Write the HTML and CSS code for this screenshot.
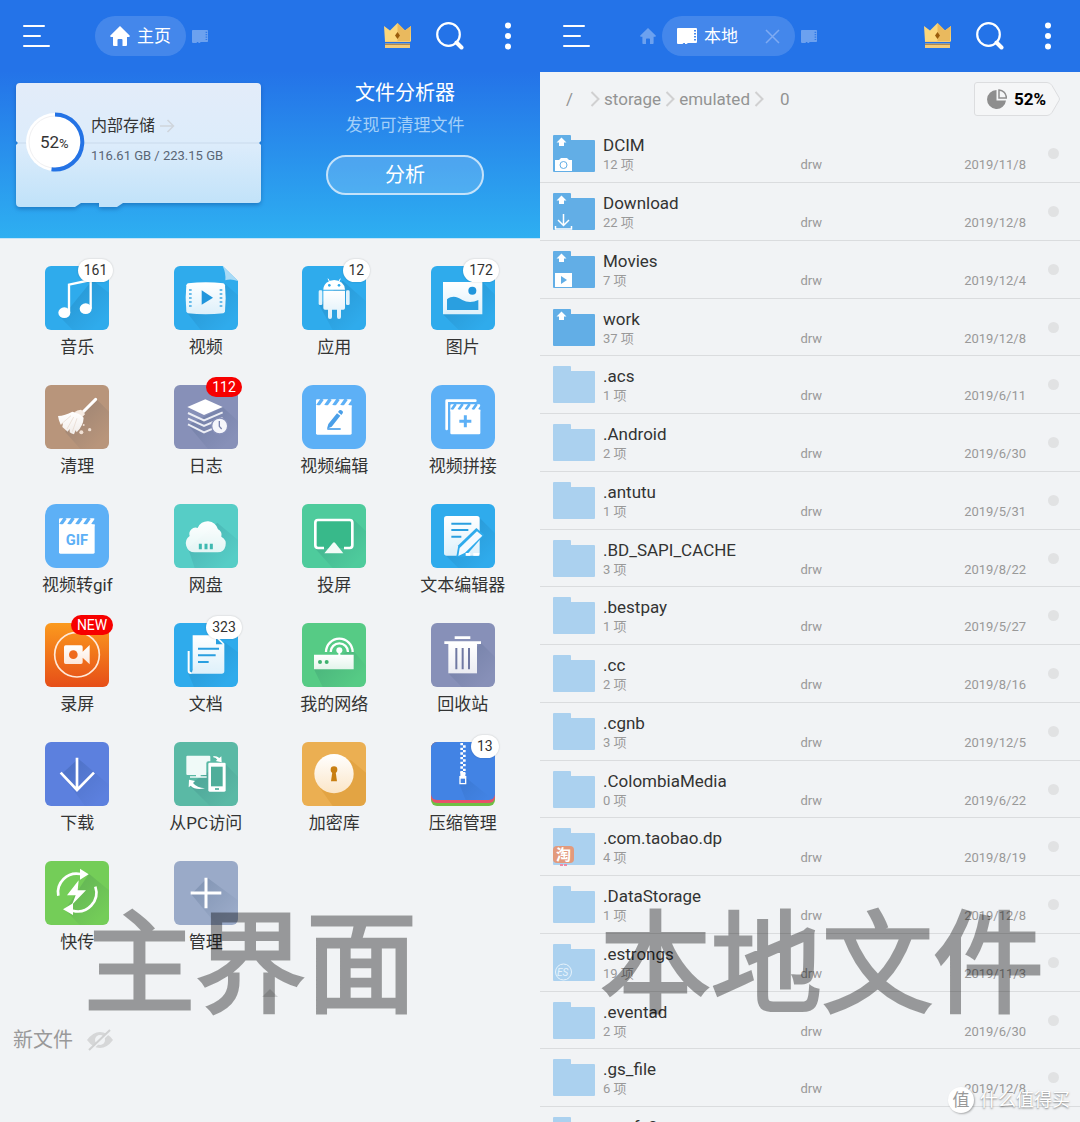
FILE: index.html
```html
<!DOCTYPE html>
<html lang="zh-CN">
<head>
    <meta charset="UTF-8">
    <meta name="viewport" content="width=device-width, initial-scale=1.0">
    <title>文件管理器</title>
    <link rel="stylesheet" href="styles.css">
</head>
<body>

    <!-- shared icons -->
    <svg class="defs" width="0" height="0" aria-hidden="true">
        <defs>
            <linearGradient id="fade" x1="0" y1="0" x2="0" y2="1">
                <stop offset="0" stop-color="#fff"/>
                <stop offset="1" stop-color="#fff" stop-opacity=".84"/>
            </linearGradient>
            <linearGradient id="orange" x1="0" y1="0" x2="0" y2="1">
                <stop offset="0" stop-color="#fb9a1e"/>
                <stop offset="1" stop-color="#e64e18"/>
            </linearGradient>
            <linearGradient id="cream" x1="0" y1="0" x2="0" y2="1">
                <stop offset="0" stop-color="#fff"/>
                <stop offset="1" stop-color="#fbe6c8"/>
            </linearGradient>
            <linearGradient id="shade" gradientUnits="userSpaceOnUse" x1="60" y1="60" x2="170" y2="170">
                <stop offset="0" stop-color="#024" stop-opacity=".16"/>
                <stop offset="1" stop-color="#024" stop-opacity="0"/>
            </linearGradient>
            <linearGradient id="sd" x1="0" y1="0" x2="0" y2="1">
                <stop offset="0" stop-color="#e3ecf9"/>
                <stop offset=".5" stop-color="#dcecfb"/>
                <stop offset="1" stop-color="#c0e2f9"/>
            </linearGradient>
        </defs>
        <symbol id="menu" viewBox="0 0 28 24">
            <path d="M2 2h20M2 12h16M2 22h25" stroke="#fff" stroke-width="2" fill="none" stroke-linecap="round"/>
        </symbol>
        <symbol id="home" viewBox="0 0 20 20">
            <path d="M10 0L19.6 9.4a.9.9 0 0 1-.6 1.5H17V19a1 1 0 0 1-1 1h-3.5v-6a1 1 0 0 0-1-1h-3a1 1 0 0 0-1 1v6H4a1 1 0 0 1-1-1v-8.1H1a.9.9 0 0 1-.6-1.5z" fill="#fff"/>
        </symbol>
        <symbol id="card" viewBox="0 0 20 16">
            <path d="M1 0h18a1 1 0 0 1 1 1v13a1 1 0 0 1-1 1h-8l-1.5 1H8v-1H6.5L5.5 16H1a1 1 0 0 1-1-1V1a1 1 0 0 1 1-1z" fill="#fff"/>
            <path d="M18 2v1.500m0 1.500v1.500m0 1.500v1.500m0 1.500v1.500" stroke="#4a8aec" stroke-width="2"/>
        </symbol>
        <symbol id="crown" viewBox="0 0 27 26">
            <path d="M0 3l6 4.500L13.500 0 21 7.500 27 3v15.500H1z" fill="#fbd77c"/>
            <path d="M13.500 0L21 7.500 27 3l-1 15.500H13.500z" fill="#e9b95e"/>
            <path d="M13.500 9l2.500 3.500-2.500 3.500-2.500-3.500z" fill="#9a5d0c"/>
            <path d="M1 18h25v1H1zM1 20.500h25v4.500H1z" fill="#f3cb78"/>
            <path d="M1 21.500h25" stroke="#b5894a"/>
        </symbol>
        <symbol id="search" viewBox="0 0 28 28">
            <circle cx="12.500" cy="12.500" r="11.300" fill="none" stroke="#fff" stroke-width="2.200"/>
            <path d="M20.500 20.500l5 5" stroke="#fff" stroke-width="4" stroke-linecap="round"/>
        </symbol>
        <symbol id="more" viewBox="0 0 8 28">
            <circle cx="4" cy="3.500" r="3" fill="#fff"/><circle cx="4" cy="14" r="3" fill="#fff"/><circle cx="4" cy="24.500" r="3" fill="#fff"/>
        </symbol>
        <symbol id="chevron" viewBox="0 0 10 16">
            <path d="M1.500 1l7 7-7 7" fill="none" stroke="#d0d0d1" stroke-width="2"/>
        </symbol>
        <symbol id="folder" viewBox="0 0 42 37">
            <path d="M1 0h16a1 1 0 0 1 1 1v4h23a1 1 0 0 1 1 1v30a1 1 0 0 1-1 1H1a1 1 0 0 1-1-1V1a1 1 0 0 1 1-1z" fill="currentColor"/>
        </symbol>
        <symbol id="up" viewBox="0 0 42 37">
            <path d="M8.500 2.500l5 5H11V11H6V7.500H3.500z" fill="#fff"/>
        </symbol>
    </svg>

    <div class="app">

        <section class="pane">
            <div class="hero">
                <div class="topbar">
                    <button class="icon-btn menu-btn" aria-label="菜单"><svg width="28" height="24"><use href="#menu"/></svg></button>
                    <nav class="tabs home-tabs">
                        <a href="#home" class="tab active"><svg width="20" height="20"><use href="#home"/></svg><span>主页</span></a>
                        <a href="#local" class="mini-tab" aria-label="本地"><svg width="16" height="13"><use href="#card"/></svg></a>
                    </nav>
                    <div class="actions">
                        <button class="icon-btn" aria-label="会员"><svg width="27" height="26"><use href="#crown"/></svg></button>
                        <button class="icon-btn" aria-label="搜索"><svg width="28" height="28"><use href="#search"/></svg></button>
                        <button class="icon-btn more-btn" aria-label="更多"><svg width="8" height="28"><use href="#more"/></svg></button>
                    </div>
                </div>
                <div class="summary">
                    <a href="#storage" class="storage">
                        <svg class="storage-bg" viewBox="0 0 245 124" preserveAspectRatio="none">
                            <path d="M4 0h237a4 4 0 0 1 4 4v54l-2 2 2 2v54a4 4 0 0 1-4 4H107l-6 4H83v-4H65l-6 4H4a4 4 0 0 1-4-4V62l2-2-2-2V4a4 4 0 0 1 4-4z" fill="url(#sd)"/>
                            <path d="M2 60h241" stroke="#c9daec"/>
                        </svg>
                        <svg class="ring" viewBox="0 0 60 60">
                            <circle cx="30" cy="30" r="29" fill="#fff"/>
                            <circle cx="30" cy="30" r="26" fill="none" stroke="#f0f0f2"/>
                            <path d="M30 2.500a27.500 27.500 0 1 1-3.500 54.800" fill="none" stroke="#2473e5" stroke-width="4"/>
                            <text x="15" y="36" class="ring-num">52<tspan class="ring-pct">%</tspan></text>
                        </svg>
                        <span class="storage-text">
                            <span class="storage-name">内部存储 <svg width="15" height="14" viewBox="0 0 15 14"><path d="M0 7h14M7.500 1l6 6-6 6" fill="none" stroke="#cfd5dc" stroke-width="1.500"/></svg></span>
                            <span class="storage-size">116.61 GB / 223.15 GB</span>
                        </span>
                    </a>
                    <div class="analyzer">
                        <h2>文件分析器</h2>
                        <p>发现可清理文件</p>
                        <button class="analyze-btn">分析</button>
                    </div>
                </div>
            </div>

            <div class="grid">
                <a href="#music" class="item">
                    <span class="icon"><svg viewBox="0 0 192 192">
                        <rect width="192" height="192" rx="18" fill="#2fabec"/>
                        <path d="M45 153l38 39h91a18 18 0 0 0 18-18V80l-50-38-65 80z" fill="url(#shade)"/>
                        <path d="M72 140V56l65-14v86" fill="none" stroke="#fff" stroke-width="7"/>
                        <ellipse cx="58" cy="140" rx="18" ry="16" fill="#fff"/><ellipse cx="122" cy="128" rx="18" ry="16" fill="#fff"/>
                    </svg><span class="badge">161</span></span>
                    <span class="label">音乐</span>
                </a>
                <a href="#video" class="item">
                    <span class="icon"><svg viewBox="0 0 192 192">
                        <path d="M18 0h128l46 45v129a18 18 0 0 1-18 18H18a18 18 0 0 1-18-18V18A18 18 0 0 1 18 0z" fill="#2fabec"/>
                        <path d="M40 141l40 51h94a18 18 0 0 0 18-18v-86l-38-34z" fill="url(#shade)"/>
                        <path d="M146 0l46 45q-22-8-38-2 2-22-8-43z" fill="#a8daf6"/>
                        <path d="M42 52q54-6 106 0 4 1 5 6 4 38 0 78-1 5-5 6-54 6-106 0-4-1-5-6-4-40 0-78 1-5 5-6z" fill="url(#fade)"/>
                        <path d="M83 73l34 22-34 21z" fill="#2196dc"/>
                        <path d="M49 70v56M141 70v56" stroke="#3fa9e4" stroke-width="8" stroke-dasharray="4 8"/>
                    </svg></span>
                    <span class="label">视频</span>
                </a>
                <a href="#apps" class="item">
                    <span class="icon"><svg viewBox="0 0 192 192">
                        <rect width="192" height="192" rx="18" fill="#2fabec"/>
                        <path d="M52 118l40 74h82a18 18 0 0 0 18-18v-68l-70-62z" fill="url(#shade)"/>
                        <path d="M64 71a32.500 29 0 0 1 65 0z" fill="#fff"/>
                        <path d="M78 38l6 12M115 38l-6 12" stroke="#fff" stroke-width="3"/>
                        <circle cx="82" cy="58" r="4" fill="#2fabec"/><circle cx="111" cy="58" r="4" fill="#2fabec"/>
                        <path d="M64 74h65v52a5 5 0 0 1-5 5h-7v22a5 5 0 0 1-12 0v-22H90v22a5 5 0 0 1-12 0v-22h-9a5 5 0 0 1-5-5z" fill="url(#fade)"/>
                        <rect x="50" y="73" width="11" height="44" rx="4" fill="#dff2fc"/><rect x="132" y="73" width="11" height="44" rx="4" fill="#dff2fc"/>
                    </svg><span class="badge">12</span></span>
                    <span class="label">应用</span>
                </a>
                <a href="#pictures" class="item">
                    <span class="icon"><svg viewBox="0 0 192 192">
                        <rect width="192" height="192" rx="18" fill="#2fabec"/>
                        <path d="M36 145l47 47h91a18 18 0 0 0 18-18V86l-38-38z" fill="url(#shade)"/>
                        <path d="M36 48h118v97H36z" fill="url(#fade)"/>
                        <circle cx="124" cy="74" r="12" fill="#2196dc"/>
                        <path d="M48 100c18-14 32-6 46 2s32 8 48 0v30H48z" fill="#2a9fe0"/>
                    </svg><span class="badge">172</span></span>
                    <span class="label">图片</span>
                </a>

                <a href="#clean" class="item">
                    <span class="icon"><svg viewBox="0 0 192 192">
                        <rect width="192" height="192" rx="18" fill="#b8957b"/>
                        <path d="M60 140l46 52h68a18 18 0 0 0 18-18V80l-38-38z" fill="url(#shade)"/>
                        <path d="M152 43l-38 38" stroke="#fff" stroke-width="9" stroke-linecap="round"/>
                        <path d="M108 74q8 4 12 14l-8 8-24-14q8-8 20-8z" fill="#f6ece4"/>
                        <path d="M82 80q-22 12-43 13 2 14 8 26l7-5-2 12 16 14 6-8v10q6 5 13 6l5-12 3 6q20-20 21-44-12-14-34-18z" fill="url(#fade)"/>
                        <path d="M78 92l-30 26M86 96l-20 36M96 100l-14 40" stroke="#e6d6ca" stroke-width="2"/>
                        <circle cx="116" cy="120" r="3" fill="#f0e0d4"/><circle cx="134" cy="134" r="5" fill="#f0e0d4"/><circle cx="109" cy="142" r="6" fill="#f0e0d4"/>
                    </svg></span>
                    <span class="label">清理</span>
                </a>
                <a href="#log" class="item">
                    <span class="icon"><svg viewBox="0 0 192 192">
                        <rect width="192" height="192" rx="18" fill="#8790b8"/>
                        <path d="M42 120l60 72h72a18 18 0 0 0 18-18v-66l-46-42z" fill="url(#shade)"/>
                        <path d="M94 43l52 23-56 24-50-24z" fill="#fff"/>
                        <path d="M42 84l48 22 56-24M42 101l48 22 56-24M42 118l48 24 34-14" fill="none" stroke="#eceef5" stroke-width="6"/>
                        <circle cx="137" cy="123" r="24" fill="#f5f6fb" stroke="#8790b8" stroke-width="4"/>
                        <path d="M136 108v16l7 8" fill="none" stroke="#7a84ad" stroke-width="4"/>
                    </svg><span class="badge red">112</span></span>
                    <span class="label">日志</span>
                </a>
                <a href="#video-edit" class="item">
                    <span class="icon"><svg viewBox="0 0 192 192">
                        <rect width="192" height="192" rx="34" fill="#5db0f6"/>
                        <rect x="42" y="43" width="107" height="106" rx="4" fill="#fff"/>
                        <path d="M47 62l14-20M71 62l14-20M95 62l14-20M119 62l14-20M143 62l10-14" stroke="#5db0f6" stroke-width="10"/>
                        <path d="M42 61h107v6H42z" fill="#fff"/>
                        <path d="M105 85l10 7-26 33-14 6 4-14zM108 81l4-5q3-2 6 0l4 3q2 3 0 6l-4 5z" fill="#4a9fe8"/>
                        <path d="M76 132h40" stroke="#4a9fe8" stroke-width="5"/>
                    </svg></span>
                    <span class="label">视频编辑</span>
                </a>
                <a href="#video-join" class="item">
                    <span class="icon"><svg viewBox="0 0 192 192">
                        <rect width="192" height="192" rx="34" fill="#5db0f6"/>
                        <path d="M47 132V47h86" fill="none" stroke="#fff" stroke-width="8" stroke-linejoin="round" stroke-linecap="round"/>
                        <rect x="58" y="58" width="90" height="90" rx="4" fill="#fff"/>
                        <path d="M62 74l12-17M83 74l12-17M104 74l12-17M125 74l12-17M145 74l10-15" stroke="#5db0f6" stroke-width="8"/>
                        <path d="M58 74h90v5H58z" fill="#fff"/>
                        <path d="M103 91v36M85 109h36" stroke="#5db0f6" stroke-width="9"/>
                    </svg></span>
                    <span class="label">视频拼接</span>
                </a>

                <a href="#gif" class="item">
                    <span class="icon"><svg viewBox="0 0 192 192">
                        <rect width="192" height="192" rx="34" fill="#5db0f6"/>
                        <rect x="42" y="43" width="107" height="106" rx="4" fill="#fff"/>
                        <path d="M47 62l14-20M71 62l14-20M95 62l14-20M119 62l14-20M143 62l10-14" stroke="#5db0f6" stroke-width="10"/>
                        <path d="M42 61h107v6H42z" fill="#fff"/>
                        <text x="96" y="122" class="gif-text">GIF</text>
                    </svg></span>
                    <span class="label">视频转gif</span>
                </a>
                <a href="#cloud" class="item">
                    <span class="icon"><svg viewBox="0 0 192 192">
                        <rect width="192" height="192" rx="18" fill="#56cdc6"/>
                        <path d="M42 132l20 60h112a18 18 0 0 0 18-18v-66l-62-52z" fill="url(#shade)"/>
                        <path d="M62 145a27 27 0 0 1-15-49 19 19 0 0 1 24-24 32 32 0 0 1 61 4 18 18 0 0 1 10 22 25 25 0 0 1-11 47z" fill="url(#fade)"/>
                        <path d="M79 119v17M96 119v17M112 119v17" stroke="#3fb9b1" stroke-width="9"/>
                    </svg></span>
                    <span class="label">网盘</span>
                </a>
                <a href="#cast" class="item">
                    <span class="icon"><svg viewBox="0 0 192 192">
                        <rect width="192" height="192" rx="18" fill="#4ecb9c"/>
                        <path d="M38 132l54 60h82a18 18 0 0 0 18-18V82l-38-36z" fill="url(#shade)"/>
                        <rect x="40" y="48" width="111" height="84" rx="8" fill="#38b98a"/>
                        <path d="M66 132H48a8 8 0 0 1-8-8V56a8 8 0 0 1 8-8h95a8 8 0 0 1 8 8v68a8 8 0 0 1-8 8h-17" fill="none" stroke="#fff" stroke-width="8"/>
                        <path d="M93 116q3-3 6 0l25 32H67z" fill="#f2fbf7"/>
                    </svg></span>
                    <span class="label">投屏</span>
                </a>
                <a href="#editor" class="item">
                    <span class="icon"><svg viewBox="0 0 192 192">
                        <rect width="192" height="192" rx="18" fill="#2fabec"/>
                        <path d="M42 152l40 40h92a18 18 0 0 0 18-18v-86l-48-48z" fill="url(#shade)"/>
                        <rect x="39" y="36" width="107" height="119" rx="8" fill="url(#fade)"/>
                        <path d="M61 59h60M61 78h51M61 98h30" stroke="#2a9fe0" stroke-width="6"/>
                        <path d="M136 72l24 20-58 66H76l6-34z" fill="#2fabec"/>
                        <path d="M138 82l16 13-52 51-20 10 4-24z" fill="#f4faff"/>
                        <path d="M104 151h14M127 151h18" stroke="#fff" stroke-width="8"/>
                    </svg></span>
                    <span class="label">文本编辑器</span>
                </a>

                <a href="#record" class="item">
                    <span class="icon"><svg viewBox="0 0 192 192">
                        <rect width="192" height="192" rx="18" fill="url(#orange)"/>
                        <circle cx="96" cy="95" r="67" fill="none" stroke="#ffe9d8" stroke-width="5"/>
                        <path d="M62 67h46a5 5 0 0 1 5 5v14l21-20v58l-21-20v14a5 5 0 0 1-5 5H62a5 5 0 0 1-5-5V72a5 5 0 0 1 5-5z" fill="url(#fade)"/>
                        <circle cx="85" cy="95" r="13" fill="#ef6a1c"/>
                    </svg><span class="badge red">NEW</span></span>
                    <span class="label">录屏</span>
                </a>
                <a href="#docs" class="item">
                    <span class="icon"><svg viewBox="0 0 192 192">
                        <rect width="192" height="192" rx="18" fill="#2fabec"/>
                        <path d="M42 150l18 42h114a18 18 0 0 0 18-18V88l-40-30z" fill="url(#shade)"/>
                        <path d="M44 84v60q0 6 8 6" fill="none" stroke="#fff" stroke-width="6"/>
                        <path d="M56 37h70l25 25v82a8 8 0 0 1-8 8H48q8-3 8-12z" fill="url(#fade)"/>
                        <path d="M126 44v20h20z" fill="#2a9fe0"/>
                        <path d="M72 77h63M72 97h53M72 117h32" stroke="#2a9fe0" stroke-width="6"/>
                    </svg><span class="badge">323</span></span>
                    <span class="label">文档</span>
                </a>
                <a href="#network" class="item">
                    <span class="icon"><svg viewBox="0 0 192 192">
                        <rect width="192" height="192" rx="18" fill="#56cb85"/>
                        <path d="M36 139l26 53h112a18 18 0 0 0 18-18v-46l-42-50z" fill="url(#shade)"/>
                        <path d="M36 95h119v44H36z" fill="url(#fade)"/>
                        <circle cx="54" cy="117" r="6" fill="#3fb26e"/><circle cx="74" cy="117" r="6" fill="#3fb26e"/>
                        <path d="M72 87a40 40 0 0 1 80 0M86 87a26 26 0 0 1 52 0" fill="none" stroke="#fff" stroke-width="7"/>
                        <circle cx="112" cy="82" r="9" fill="#fff"/>
                        <path d="M112 84v12" stroke="#fff" stroke-width="6"/>
                    </svg></span>
                    <span class="label">我的网络</span>
                </a>
                <a href="#trash" class="item">
                    <span class="icon"><svg viewBox="0 0 192 192">
                        <rect width="192" height="192" rx="18" fill="#8790b8"/>
                        <path d="M52 151l40 41h82a18 18 0 0 0 18-18v-72l-42-42z" fill="url(#shade)"/>
                        <path d="M71 40h47v8H71zM40 55h110v8H40z" fill="#fff"/>
                        <path d="M52 63h86v88H52z" fill="url(#fade)"/>
                        <path d="M76 75v64M95 75v64M114 75v64" stroke="#7079a3" stroke-width="6"/>
                    </svg></span>
                    <span class="label">回收站</span>
                </a>

                <a href="#download" class="item">
                    <span class="icon"><svg viewBox="0 0 192 192">
                        <rect width="192" height="192" rx="18" fill="#5c80de"/>
                        <path d="M50 96l70 96h54a18 18 0 0 0 18-18v-46L100 50z" fill="url(#shade)"/>
                        <path d="M96 47v97M47 92l49 52 51-52" fill="none" stroke="#fff" stroke-width="8"/>
                    </svg></span>
                    <span class="label">下载</span>
                </a>
                <a href="#pc" class="item">
                    <span class="icon"><svg viewBox="0 0 192 192">
                        <rect width="192" height="192" rx="18" fill="#5ab9a5"/>
                        <path d="M44 128l64 64h66a18 18 0 0 0 18-18v-70l-44-44z" fill="url(#shade)"/>
                        <path d="M40 41h66a3 3 0 0 1 3 3v14h-6a6 6 0 0 0-6 6v35H80v4h18v4H48v-4h18v-4H40a3 3 0 0 1-3-3V44a3 3 0 0 1 3-3z" fill="#f0faf8"/>
                        <path d="M107 62h44a4 4 0 0 1 4 4v79a4 4 0 0 1-4 4h-44a4 4 0 0 1-4-4V66a4 4 0 0 1 4-4z" fill="#fff"/>
                        <path d="M111 74h35v59h-35z" fill="#4fae9a"/><path d="M123 141h12" stroke="#4fae9a" stroke-width="5"/>
                        <path d="M118 42q12 0 18 6l6-5 1 18-18-4 5-4q-4-6-12-7zM45 113l18 4-6 6q12 15 36 16-30 6-43-8l-6 5z" fill="#fff"/>
                    </svg></span>
                    <span class="label">从PC访问</span>
                </a>
                <a href="#vault" class="item">
                    <span class="icon"><svg viewBox="0 0 192 192">
                        <rect width="192" height="192" rx="18" fill="#ebaf52"/>
                        <path d="M44 124l48 68h82a18 18 0 0 0 18-18V92l-46-38z" fill="#d18a22" opacity=".3"/>
                        <circle cx="96" cy="95" r="59" fill="url(#cream)"/>
                        <path d="M91 90h10l4 28H87z" fill="#c87f12"/><circle cx="96" cy="83" r="10" fill="#c87f12"/>
                    </svg></span>
                    <span class="label">加密库</span>
                </a>
                <a href="#zip" class="item">
                    <span class="icon"><svg viewBox="0 0 192 192">
                        <rect width="192" height="192" rx="18" fill="#6fbf44"/>
                        <rect width="192" height="183" rx="18" fill="#e8506a"/>
                        <rect width="192" height="174" rx="18" fill="#4283e4"/>
                        <path d="M86 128l18 46h70a18 18 0 0 0 10-3l-78-63z" fill="url(#shade)"/>
                        <path d="M92 3v94" stroke="#fff" stroke-width="8" stroke-dasharray="7 7"/>
                        <path d="M100 10v87" stroke="#fff" stroke-width="8" stroke-dasharray="7 7"/>
                        <path d="M88 90h15v12h3v25H85v-25h3z" fill="#fff"/><path d="M89 110h13v13H89z" fill="#4283e4"/>
                    </svg><span class="badge">13</span></span>
                    <span class="label">压缩管理</span>
                </a>

                <a href="#share" class="item">
                    <span class="icon"><svg viewBox="0 0 192 192">
                        <rect width="192" height="192" rx="18" fill="#74cd58"/>
                        <path d="M60 146l44 46h70a18 18 0 0 0 18-18V88l-60-50z" fill="url(#shade)"/>
                        <path d="M40 104a56 56 0 0 1 66-65M151 77a56 56 0 0 1-68 72" fill="none" stroke="#fff" stroke-width="8"/>
                        <path d="M105 23l26 17-26 16zM84 127l-30 18 30 17z" fill="#fff"/>
                        <path d="M101 58L66 103h26l-11 28 42-43H98z" fill="#fff"/>
                    </svg></span>
                    <span class="label">快传</span>
                </a>
                <a href="#manage" class="item">
                    <span class="icon"><svg viewBox="0 0 192 192">
                        <rect width="192" height="192" rx="18" fill="#9aaac8"/>
                        <path d="M52 100l76 92h46a18 18 0 0 0 18-18v-56L100 50z" fill="url(#shade)"/>
                        <path d="M96 50v92M50 96h92" stroke="#fff" stroke-width="9"/>
                    </svg></span>
                    <span class="label">管理</span>
                </a>
            </div>

            <svg class="pull-up" width="16" height="8" viewBox="0 0 16 8"><path d="M8 0l8 8H0z" fill="#cfd1d3"/></svg>
            <div class="recent">
                <span>新文件</span>
                <svg width="28" height="22" viewBox="0 0 28 22"><path d="M1 11Q7 3 14 3t13 8q-6 8-13 8T1 11z" fill="#d6d7d8"/><circle cx="14" cy="11" r="5" fill="#f1f3f5"/><path d="M5 21L26 1" stroke="#f1f3f5" stroke-width="2"/><path d="M3 21L24 1" stroke="#d0d1d2" stroke-width="2"/></svg>
            </div>
            <div class="caption caption-home">主界面</div>
        </section>

        <section class="pane">
            <div class="topbar solid">
                <button class="icon-btn menu-btn" aria-label="菜单"><svg width="28" height="24"><use href="#menu"/></svg></button>
                <nav class="tabs local-tabs">
                    <a href="#home" class="mini-tab" aria-label="主页"><svg width="16" height="16"><use href="#home"/></svg></a>
                    <div class="tab active">
                        <svg width="20" height="16"><use href="#card"/></svg><span>本地</span>
                        <button class="icon-btn close-btn" aria-label="关闭"><svg width="15" height="15" viewBox="0 0 15 15"><path d="M1 1l13 13M14 1L1 14" stroke="#7fabf2" stroke-width="1.500"/></svg></button>
                    </div>
                    <a href="#local" class="mini-tab" aria-label="本地"><svg width="16" height="13"><use href="#card"/></svg></a>
                </nav>
                <div class="actions">
                    <button class="icon-btn" aria-label="会员"><svg width="27" height="26"><use href="#crown"/></svg></button>
                    <button class="icon-btn" aria-label="搜索"><svg width="28" height="28"><use href="#search"/></svg></button>
                    <button class="icon-btn more-btn" aria-label="更多"><svg width="8" height="28"><use href="#more"/></svg></button>
                </div>
            </div>

            <div class="pathbar">
                <nav class="crumbs">
                    <a href="#root" class="root">/</a>
                    <svg width="10" height="16"><use href="#chevron"/></svg>
                    <a href="#storage">storage</a>
                    <svg width="10" height="16"><use href="#chevron"/></svg>
                    <a href="#emulated">emulated</a>
                    <svg width="10" height="16"><use href="#chevron"/></svg>
                    <a href="#0" class="last">0</a>
                </nav>
                <button class="usage">
                    <svg class="usage-bg" width="86" height="34" viewBox="0 0 86 34"><path d="M3 .5h70q3 0 5 3l7 12q1 1.500 0 3l-7 12q-2 3-5 3H3Q.5 33.500.5 31V3Q.5.5 3 .5z" fill="#f5f6f7" stroke="#dcdddf"/></svg>
                    <svg width="20" height="20" viewBox="0 0 20 20"><path d="M9.500 1A9.500 9.500 0 1 0 19 11.500H9.500z" fill="#8e8e8e"/><path d="M12 1v8h7.500q-.5-7-7.500-8z" fill="none" stroke="#8e8e8e" stroke-width="1.500"/></svg>
                    <span>52%</span>
                </button>
            </div>

            <ul class="files">
                <li class="file">
                    <svg class="folder"><use href="#folder"/><use href="#up"/><path d="M3 25h3l2-2h6l2 2h3v11H2V25z" fill="#fff"/><circle cx="10.500" cy="30" r="3.500" fill="none" stroke="#62aee6"/></svg>
                    <div class="info"><a href="#DCIM" class="name">DCIM</a><div class="meta"><span>12 项</span><span>drw</span><span>2019/11/8</span></div></div>
                    <input type="checkbox" aria-label="选择 DCIM">
                </li>
                <li class="file">
                    <svg class="folder"><use href="#folder"/><use href="#up"/><path d="M10.500 21v11M5 27l5.500 5.500L16 27M2.500 33v3h16v-3" fill="none" stroke="#fff" stroke-width="1.500"/></svg>
                    <div class="info"><a href="#Download" class="name">Download</a><div class="meta"><span>22 项</span><span>drw</span><span>2019/12/8</span></div></div>
                    <input type="checkbox" aria-label="选择 Download">
                </li>
                <li class="file">
                    <svg class="folder"><use href="#folder"/><use href="#up"/><path d="M2 22h17v14H2z" fill="#fff"/><path d="M8 25l6 4-6 4z" fill="#62aee6"/></svg>
                    <div class="info"><a href="#Movies" class="name">Movies</a><div class="meta"><span>7 项</span><span>drw</span><span>2019/12/4</span></div></div>
                    <input type="checkbox" aria-label="选择 Movies">
                </li>
                <li class="file">
                    <svg class="folder"><use href="#folder"/><use href="#up"/></svg>
                    <div class="info"><a href="#work" class="name">work</a><div class="meta"><span>37 项</span><span>drw</span><span>2019/12/8</span></div></div>
                    <input type="checkbox" aria-label="选择 work">
                </li>
                <li class="file">
                    <svg class="folder hidden-folder"><use href="#folder"/></svg>
                    <div class="info"><a href="#acs" class="name">.acs</a><div class="meta"><span>1 项</span><span>drw</span><span>2019/6/11</span></div></div>
                    <input type="checkbox" aria-label="选择 .acs">
                </li>
                <li class="file">
                    <svg class="folder hidden-folder"><use href="#folder"/></svg>
                    <div class="info"><a href="#Android" class="name">.Android</a><div class="meta"><span>2 项</span><span>drw</span><span>2019/6/30</span></div></div>
                    <input type="checkbox" aria-label="选择 .Android">
                </li>
                <li class="file">
                    <svg class="folder hidden-folder"><use href="#folder"/></svg>
                    <div class="info"><a href="#antutu" class="name">.antutu</a><div class="meta"><span>1 项</span><span>drw</span><span>2019/5/31</span></div></div>
                    <input type="checkbox" aria-label="选择 .antutu">
                </li>
                <li class="file">
                    <svg class="folder hidden-folder"><use href="#folder"/></svg>
                    <div class="info"><a href="#BD_SAPI_CACHE" class="name">.BD_SAPI_CACHE</a><div class="meta"><span>3 项</span><span>drw</span><span>2019/8/22</span></div></div>
                    <input type="checkbox" aria-label="选择 .BD_SAPI_CACHE">
                </li>
                <li class="file">
                    <svg class="folder hidden-folder"><use href="#folder"/></svg>
                    <div class="info"><a href="#bestpay" class="name">.bestpay</a><div class="meta"><span>1 项</span><span>drw</span><span>2019/5/27</span></div></div>
                    <input type="checkbox" aria-label="选择 .bestpay">
                </li>
                <li class="file">
                    <svg class="folder hidden-folder"><use href="#folder"/></svg>
                    <div class="info"><a href="#cc" class="name">.cc</a><div class="meta"><span>2 项</span><span>drw</span><span>2019/8/16</span></div></div>
                    <input type="checkbox" aria-label="选择 .cc">
                </li>
                <li class="file">
                    <svg class="folder hidden-folder"><use href="#folder"/></svg>
                    <div class="info"><a href="#cgnb" class="name">.cgnb</a><div class="meta"><span>3 项</span><span>drw</span><span>2019/12/5</span></div></div>
                    <input type="checkbox" aria-label="选择 .cgnb">
                </li>
                <li class="file">
                    <svg class="folder hidden-folder"><use href="#folder"/></svg>
                    <div class="info"><a href="#ColombiaMedia" class="name">.ColombiaMedia</a><div class="meta"><span>0 项</span><span>drw</span><span>2019/6/22</span></div></div>
                    <input type="checkbox" aria-label="选择 .ColombiaMedia">
                </li>
                <li class="file">
                    <svg class="folder hidden-folder"><use href="#folder"/><rect x="0" y="18" width="21" height="17" rx="4" fill="#e39a7c"/><text x="3" y="32" class="taobao">淘</text><path d="M7 37h3M11 37h3" stroke="#ee8aa6" stroke-width="2"/></svg>
                    <div class="info"><a href="#taobao" class="name">.com.taobao.dp</a><div class="meta"><span>4 项</span><span>drw</span><span>2019/8/19</span></div></div>
                    <input type="checkbox" aria-label="选择 .com.taobao.dp">
                </li>
                <li class="file">
                    <svg class="folder hidden-folder"><use href="#folder"/></svg>
                    <div class="info"><a href="#DataStorage" class="name">.DataStorage</a><div class="meta"><span>1 项</span><span>drw</span><span>2019/12/8</span></div></div>
                    <input type="checkbox" aria-label="选择 .DataStorage">
                </li>
                <li class="file">
                    <svg class="folder hidden-folder"><use href="#folder"/><circle cx="10.500" cy="28" r="8" fill="none" stroke="#e6f3fc"/><text x="4" y="32" class="es">ES</text></svg>
                    <div class="info"><a href="#estrongs" class="name">.estrongs</a><div class="meta"><span>19 项</span><span>drw</span><span>2019/11/3</span></div></div>
                    <input type="checkbox" aria-label="选择 .estrongs">
                </li>
                <li class="file">
                    <svg class="folder hidden-folder"><use href="#folder"/></svg>
                    <div class="info"><a href="#eventad" class="name">.eventad</a><div class="meta"><span>2 项</span><span>drw</span><span>2019/6/30</span></div></div>
                    <input type="checkbox" aria-label="选择 .eventad">
                </li>
                <li class="file">
                    <svg class="folder hidden-folder"><use href="#folder"/></svg>
                    <div class="info"><a href="#gs_file" class="name">.gs_file</a><div class="meta"><span>6 项</span><span>drw</span><span>2019/12/8</span></div></div>
                    <input type="checkbox" aria-label="选择 .gs_file">
                </li>
                <li class="file">
                    <svg class="folder hidden-folder"><use href="#folder"/></svg>
                    <div class="info"><a href="#gs_fs0" class="name">.gs_fs0</a></div>
                </li>
            </ul>
            <div class="caption caption-local">本地文件</div>
            <div class="site-mark"><span class="mark-logo">值</span><span>什么值得买</span></div>
        </section>

    </div>

</body>
</html>
```
FILE: styles.css
```css
* {
    box-sizing: border-box;
}

body {
    margin: 0;
    background-color: #f1f3f5;
    color: #333;
    font-family: Roboto, "Noto Sans CJK SC", sans-serif;
}

a {
    color: inherit;
    text-decoration: none;
}

button {
    font-family: inherit;
    cursor: pointer;
}

svg {
    display: block;
}

.defs {
    position: absolute;
}

.app {
    display: grid;
    grid-template-columns: 1fr 1fr;
    height: 100vh;
    overflow: hidden;
}

.pane {
    position: relative;
    min-width: 0;
    overflow: hidden;
}

/* top bar */
.hero {
    background: linear-gradient(#2473e8 30%, #2eaff1);
    border-bottom: 1px solid #c4e4f7;
    padding-bottom: 31px;
}

.topbar {
    display: flex;
    align-items: center;
    height: 72px;
    padding: 0 28px 0 22px;
}

.topbar.solid {
    background-color: #2473e8;
}

.icon-btn {
    padding: 0;
    border: none;
    background: none;
}

.tabs {
    display: flex;
    align-items: center;
    gap: 6px;
}

.home-tabs {
    margin-left: 45px;
}

.local-tabs {
    margin-left: 50px;
}

.tab {
    display: flex;
    align-items: center;
    gap: 7px;
    height: 40px;
    padding: 0 15px;
    border-radius: 20px;
    background-color: rgba(255, 255, 255, 0.15);
    color: #fff;
    font-size: 17px;
    line-height: 24px;
}

.close-btn {
    margin-left: 20px;
}

.mini-tab {
    opacity: 0.33;
}

.actions {
    display: flex;
    align-items: center;
    gap: 25px;
    margin-left: auto;
}

.more-btn {
    margin-left: 15px;
}

/* storage card */
.summary {
    display: grid;
    grid-template-columns: 245px 1fr;
    padding: 11px 0 0 16px;
}

.storage {
    position: relative;
    display: flex;
    align-items: center;
    height: 124px;
    padding: 0 0 6px 9px;
    gap: 6px;
}

.storage-bg {
    position: absolute;
    left: 0;
    top: 0;
    width: 100%;
    height: 100%;
    filter: drop-shadow(0 2px 2px rgba(10, 60, 130, 0.4));
}

.ring {
    position: relative;
    width: 60px;
    height: 60px;
}

.ring-num {
    font-size: 17px;
    fill: #333;
}

.ring-pct {
    font-size: 13px;
}

.storage-text {
    position: relative;
    display: flex;
    flex-direction: column;
    gap: 8px;
    padding-bottom: 4px;
}

.storage-name {
    display: flex;
    align-items: center;
    gap: 5px;
    font-size: 16px;
    line-height: 24px;
}

.storage-size {
    color: #5a6675;
    font-size: 13px;
    line-height: 20px;
}

.analyzer {
    display: flex;
    flex-direction: column;
    align-items: center;
    padding-left: 9px;
    color: #fff;
}

.analyzer h2 {
    margin: 0;
    font-size: 20px;
    font-weight: normal;
    line-height: 20px;
}

.analyzer p {
    margin: 10px 0 18px;
    color: #a3cff8;
    font-size: 17px;
    line-height: 24px;
}

.analyze-btn {
    width: 158px;
    height: 40px;
    padding: 0;
    border: 2px solid #c4e2fa;
    border-radius: 20px;
    background-color: rgba(255, 255, 255, 0.17);
    color: #fff;
    font-size: 20px;
    line-height: 34px;
}

/* app grid */
.grid {
    display: grid;
    grid-template-columns: repeat(4, 1fr);
    gap: 21px 0;
    padding: 27px 13px 0;
}

.item {
    display: flex;
    flex-direction: column;
    align-items: center;
}

.icon {
    position: relative;
    width: 64px;
    height: 64px;
}

.gif-text {
    fill: #5db0f6;
    font-size: 44px;
    font-weight: bold;
    text-anchor: middle;
}

.label {
    font-size: 17px;
    line-height: 34px;
    white-space: nowrap;
}

.badge {
    position: absolute;
    top: -7px;
    right: -4px;
    min-width: 27px;
    padding: 0 6px;
    border-radius: 12px;
    background-color: #fff;
    box-shadow: 0 0 2px rgba(0, 0, 0, 0.2);
    font-size: 14px;
    line-height: 23px;
    text-align: center;
}

.badge.red {
    top: -8px;
    background-color: #f70000;
    box-shadow: none;
    color: #fff;
    line-height: 20px;
}

.pull-up {
    margin: 30px auto 0;
}

.recent {
    display: flex;
    align-items: center;
    gap: 13px;
    margin-top: 28px;
    padding-left: 13px;
    color: #999;
    font-size: 20px;
    line-height: 30px;
}

/* path bar */
.pathbar {
    display: flex;
    align-items: center;
    justify-content: space-between;
    height: 53px;
    padding: 0 20px 0 26px;
}

.crumbs {
    display: flex;
    align-items: center;
    gap: 4px;
    color: #939393;
    font-size: 17px;
}

.root {
    margin-right: 13px;
}

.last {
    margin-left: 12px;
}

.usage {
    position: relative;
    display: flex;
    align-items: center;
    gap: 7px;
    width: 86px;
    height: 34px;
    padding: 0 0 0 13px;
    border: none;
    background: none;
    color: #000;
    font-size: 17px;
    font-weight: bold;
}

.usage-bg {
    position: absolute;
    left: 0;
    top: 0;
}

.usage svg,
.usage span {
    flex-shrink: 0;
}

.usage > :not(.usage-bg) {
    position: relative;
}

/* file list */
.files {
    display: grid;
    grid-auto-rows: 58px 58px 58px 57px;
    margin: 0;
    padding: 0;
    list-style: none;
}

.file {
    display: flex;
    align-items: center;
    gap: 8px;
    padding: 0 21px 0 13px;
    border-bottom: 1px solid #dadcde;
}

.folder {
    flex-shrink: 0;
    width: 42px;
    height: 37px;
    overflow: visible;
    color: #62aee6;
}

.hidden-folder {
    color: #abd1ef;
}

.taobao {
    fill: #fff;
    font-size: 15px;
    font-weight: bold;
}

.es {
    fill: #e6f3fc;
    font-size: 10px;
    font-style: italic;
}

.info {
    flex: 1;
    min-height: 43px;
    padding-top: 3px;
}

.name {
    display: block;
    font-size: 17px;
    line-height: 20px;
}

.meta {
    display: grid;
    grid-template-columns: 7fr 4fr 4fr;
    color: #999;
    font-size: 13px;
    line-height: 20px;
}

.meta span:last-child {
    text-align: right;
}

.file input {
    appearance: none;
    width: 11px;
    height: 11px;
    margin: 0 0 0 14px;
    border-radius: 50%;
    background-color: #e1e2e3;
}

.file input:checked {
    background-color: #2473e8;
}

/* large captions over both screens */
.caption {
    position: absolute;
    top: 886px;
    color: #000;
    font-size: 111px;
    line-height: 160px;
    opacity: 0.37;
    white-space: nowrap;
    pointer-events: none;
    -webkit-text-stroke: 3px #000;
}

.caption-home {
    left: 84px;
}

.caption-local {
    left: 60px;
}

.site-mark {
    position: absolute;
    right: 10px;
    bottom: 8px;
    display: flex;
    align-items: center;
    gap: 6px;
    color: #fff;
    font-size: 18px;
    line-height: 28px;
    text-shadow: 0 1px 2px rgba(0, 0, 0, 0.5);
}

.mark-logo {
    width: 26px;
    height: 26px;
    border-radius: 50%;
    background-color: #fff;
    box-shadow: 1px 1px 2px rgba(0, 0, 0, 0.3);
    color: #999;
    font-size: 17px;
    line-height: 26px;
    text-align: center;
    text-shadow: none;
}
```
